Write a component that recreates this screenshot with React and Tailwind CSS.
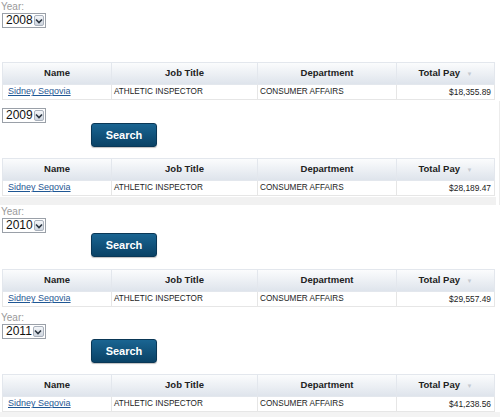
import React from 'react'

const rows = {
  2008: '$18,355.89',
  2009: '$28,189.47',
  2010: '$29,557.49',
  2011: '$41,238.56',
}

function YearSelect({ year }) {
  return (
    <div className="ml-[2px] flex h-[15px] w-[44px] items-stretch border border-[#9aa0a8] bg-white">
      <span className="flex-1 pl-[3px] text-[12px] leading-[13px] text-[#111]">{year}</span>
      <span className="m-[1px] flex w-[13px] items-center justify-center rounded-[2px] border border-[#a9b1bc] bg-gradient-to-b from-[#f4f6f9] to-[#cfd6df]">
        <svg width="8" height="6" viewBox="0 0 8 6">
          <path d="M1 1.5 L4 4.5 L7 1.5" fill="none" stroke="#2a3440" strokeWidth="1.6" />
        </svg>
      </span>
    </div>
  )
}

function SearchButton() {
  return (
    <div className="ml-[91px] flex h-[24px] w-[66px] items-center justify-center rounded-[3px] border border-[#0a3756] bg-gradient-to-b from-[#1a6592] to-[#0a4266] text-[11px] font-bold text-white shadow-[0_1px_1px_rgba(0,0,0,0.25)]">
      Search
    </div>
  )
}

function PayTable({ year }) {
  return (
    <table className="ml-[2px] w-[492px] table-fixed border-collapse text-[#1c1c1c]">
      <colgroup>
        <col className="w-[109px]" />
        <col className="w-[146px]" />
        <col className="w-[139px]" />
        <col className="w-[98px]" />
      </colgroup>
      <thead>
        <tr className="h-[22px] bg-gradient-to-b from-[#fbfcfd] to-[#dde3eb] text-[9.5px] font-bold text-[#222]">
          <th className="border border-[#e3e7ed] text-center">Name</th>
          <th className="border border-[#e3e7ed] text-center">Job Title</th>
          <th className="border border-[#e3e7ed] text-center">Department</th>
          <th className="border border-[#e3e7ed] text-center">
            Total Pay <span className="ml-[4px] text-[6px] font-normal text-[#c4c9d0]">▼</span>
          </th>
        </tr>
      </thead>
      <tbody>
        <tr className="h-[15px] bg-white text-[8.2px]">
          <td className="border border-[#e6e6e6] pl-[5px]">
            <a className="text-[9px] text-[#1f5794] underline">Sidney Segovia</a>
          </td>
          <td className="border border-[#e6e6e6] pl-[2px]">ATHLETIC INSPECTOR</td>
          <td className="border border-[#e6e6e6] pl-[2px]">CONSUMER AFFAIRS</td>
          <td className="border border-[#e6e6e6] pr-[3px] text-right text-[8.4px]">{rows[year]}</td>
        </tr>
      </tbody>
    </table>
  )
}

function Label() {
  return <div className="h-[12px] pl-[1px] text-[10px] leading-[12px] text-[#9a9a9a]">Year:</div>
}

export default function App() {
  return (
    <div className="h-[417px] w-[500px] overflow-hidden bg-white" style={{ fontFamily: '"Liberation Sans", Arial, sans-serif' }}>
      {/* 2008 */}
      <div className="h-[101px] pt-[1px]">
        <Label />
        <YearSelect year={2008} />
        <div className="mt-[34px]">
          <PayTable year={2008} />
        </div>
      </div>

      {/* 2009 */}
      <div className="h-[104px] border-r border-[#ececec] bg-white pt-[7px]">
        <YearSelect year={2009} />
        <SearchButton />
        <div className="mt-[11px]">
          <PayTable year={2009} />
        </div>
        <div className="mt-[1px] h-[8px] w-[496px] bg-[#f1f1f1]" />
      </div>

      {/* 2010 */}
      <div className="h-[105px] pt-[1px]">
        <Label />
        <YearSelect year={2010} />
        <SearchButton />
        <div className="mt-[12px]">
          <PayTable year={2010} />
        </div>
      </div>

      {/* 2011 */}
      <div className="pt-[2px]">
        <Label />
        <YearSelect year={2011} />
        <SearchButton />
        <div className="mt-[11px]">
          <PayTable year={2011} />
        </div>
        <div className="h-[8px] bg-[#f3f3f3]" />
      </div>
    </div>
  )
}
